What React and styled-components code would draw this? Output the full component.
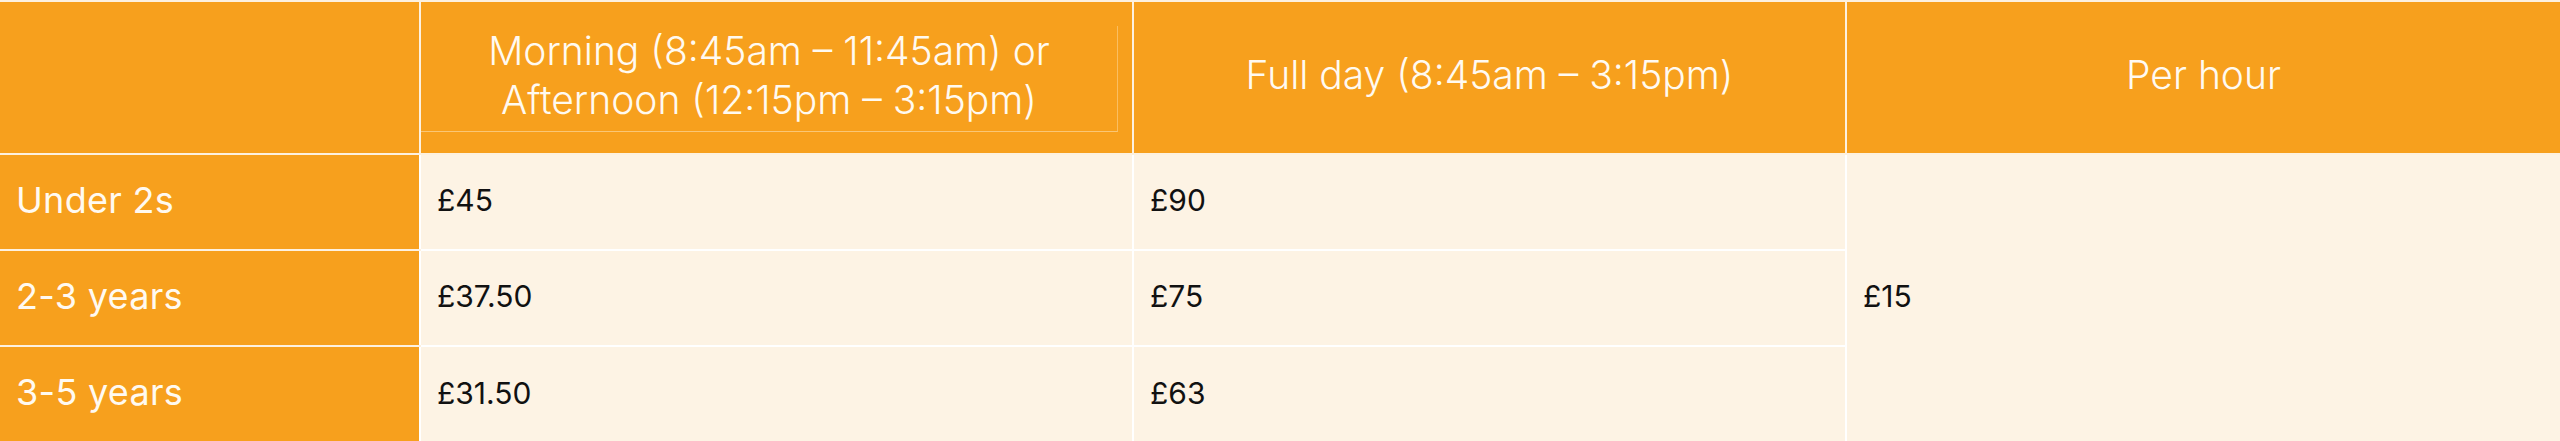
import React from "react";
import styled, { createGlobalStyle } from "styled-components";

const GlobalStyle = createGlobalStyle`
  html, body {
    margin: 0;
    padding: 0;
    background: #ffffff;
  }
`;

const ORANGE = "#f7a01d";
const CREAM = "#fdf3e4";
const LINE = "#fdf1df";

const PriceTable = styled.table`
  width: 2560px;
  border-collapse: collapse;
  table-layout: fixed;
  font-family: Inter, "Liberation Sans", sans-serif;
  border-top: 2px solid ${LINE};
`;

const HeadCell = styled.th`
  height: 145px;
  padding: 0 0 6px 0;
  background-color: ${ORANGE};
  color: #fffaf1;
  font-size: 39px;
  font-weight: 300;
  line-height: 49px;
  text-align: center;
  vertical-align: middle;
  border-left: 2px solid ${LINE};
  border-bottom: 2px solid ${LINE};

  &:first-child {
    border-left: none;
  }
`;

const HeadInner = styled.div`
  margin: 8px 14px 0 0;
  padding-bottom: 7px;
  border-right: 1px solid rgba(255, 244, 225, 0.35);
  border-bottom: 1px solid rgba(255, 244, 225, 0.45);
`;

const LabelCell = styled.th`
  height: 90px;
  padding: 0 0 4px 16px;
  background-color: ${ORANGE};
  color: #fffaf1;
  font-size: 36px;
  font-weight: 400;
  letter-spacing: 0.3px;
  text-align: left;
  vertical-align: middle;
  border-bottom: 2px solid ${LINE};
`;

const PriceCell = styled.td`
  padding: 0 0 4px 16px;
  background-color: ${CREAM};
  color: #111111;
  font-size: 30px;
  font-weight: 400;
  vertical-align: middle;
  border-left: 2px solid #ffffff;
  border-bottom: 2px solid #ffffff;

  tr:last-child & {
    border-bottom: none;
  }
`;

const rows = [
  { age: "Under 2s", half: "£45", full: "£90" },
  { age: "2-3 years", half: "£37.50", full: "£75" },
  { age: "3-5 years", half: "£31.50", full: "£63" },
];

const App = () => {
  return (
    <>
      <GlobalStyle />
      <PriceTable>
        <colgroup>
          <col style={{ width: "420px" }} />
          <col style={{ width: "713px" }} />
          <col style={{ width: "713px" }} />
          <col style={{ width: "714px" }} />
        </colgroup>
        <thead>
          <tr>
            <HeadCell />
            <HeadCell>
              <HeadInner>
                Morning (8:45am – 11:45am) or
                <br />
                Afternoon (12:15pm – 3:15pm)
              </HeadInner>
            </HeadCell>
            <HeadCell>Full day (8:45am – 3:15pm)</HeadCell>
            <HeadCell>Per hour</HeadCell>
          </tr>
        </thead>
        <tbody>
          {rows.map((row, i) => (
            <tr key={row.age}>
              <LabelCell>{row.age}</LabelCell>
              <PriceCell>{row.half}</PriceCell>
              <PriceCell>{row.full}</PriceCell>
              {i === 0 && <PriceCell rowSpan={3}>£15</PriceCell>}
            </tr>
          ))}
        </tbody>
      </PriceTable>
    </>
  );
};

export default App;
